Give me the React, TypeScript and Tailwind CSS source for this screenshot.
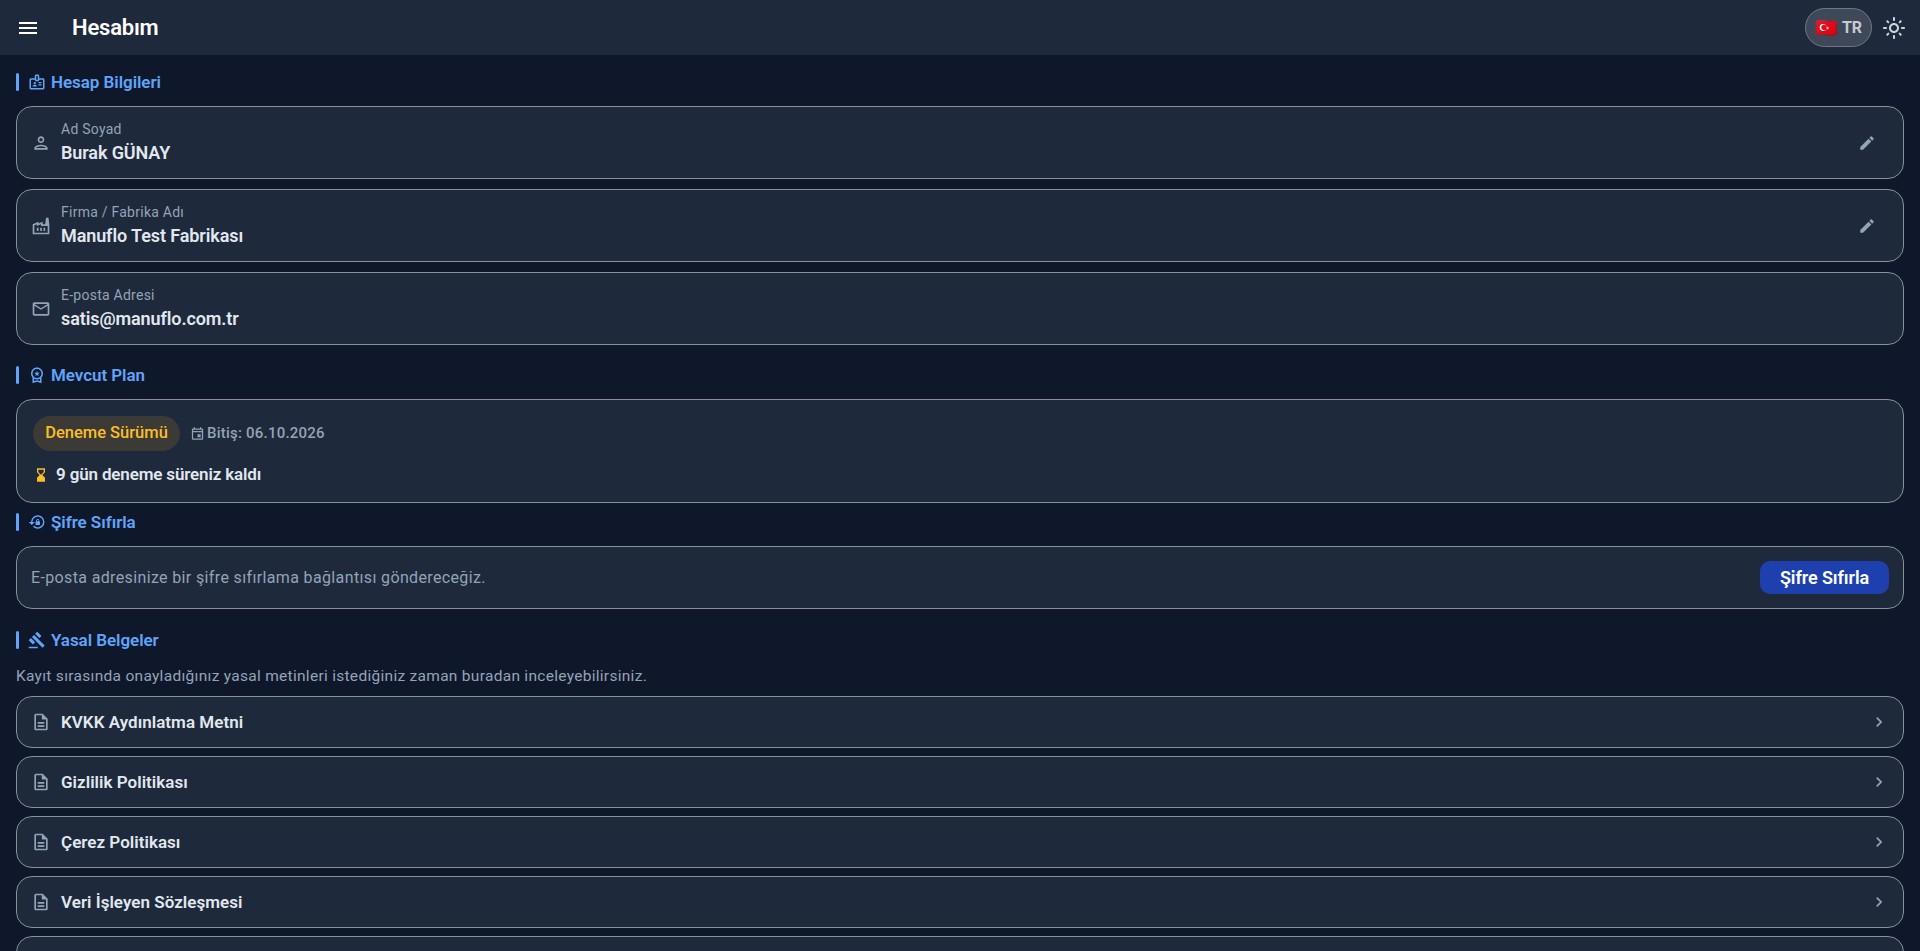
import React from "react";
import {
  MdChevronRight,
  MdEdit,
  MdGavel,
  MdHourglassBottom,
  MdLockReset,
  MdMenu,
  MdOutlineBadge,
  MdOutlineDescription,
  MdOutlineEmail,
  MdOutlineEvent,
  MdOutlineFactory,
  MdOutlineLightMode,
  MdOutlinePerson,
  MdOutlineWorkspacePremium,
} from "react-icons/md";

const cardClass = "rounded-2xl border border-[#8b8f98] bg-[#1e293b]";

function SectionTitle({ icon, title, className }: { icon: React.ReactNode; title: string; className: string }) {
  return (
    <div className={`flex h-[18px] items-center ${className}`}>
      <div className="h-[18px] w-[3px] rounded-sm bg-[#60a5fa]" />
      <span className="ml-[9px] text-[#60a5fa]">{icon}</span>
      <span className="ml-[5px] pt-px text-[17px] font-semibold tracking-[-0.05px] text-[#60a5fa]">{title}</span>
    </div>
  );
}

function InfoCard({
  icon,
  label,
  value,
  editable,
}: {
  icon: React.ReactNode;
  label: string;
  value: string;
  editable?: boolean;
}) {
  return (
    <div className={`flex h-[73px] items-center pl-[14px] pr-[27px] ${cardClass}`}>
      <span className="text-[#94a3b8]">{icon}</span>
      <div className="ml-[10px] flex-1">
        <div className="text-sm leading-5 tracking-[0.25px] text-[#94a3b8]">{label}</div>
        <div className="pb-px pt-[2px] text-lg font-semibold leading-6 tracking-[-0.1px] text-[#e2e8f0]">{value}</div>
      </div>
      {editable && <MdEdit className="text-[#94a3b8]" size={18} />}
    </div>
  );
}

function DocRow({ title }: { title: string }) {
  return (
    <div className={`flex h-[52px] shrink-0 items-center pl-[14px] pr-[14px] ${cardClass}`}>
      <MdOutlineDescription className="text-[#94a3b8]" size={20} />
      <span className="ml-[10px] flex-1 pt-px text-[17px] font-semibold tracking-[0.03px] text-[#e2e8f0]">{title}</span>
      <MdChevronRight className="text-[#94a3b8]" size={20} />
    </div>
  );
}

export default function App() {
  return (
    <div className="h-screen overflow-hidden bg-[#0f172a] font-['Roboto',sans-serif]">
      {/* App bar */}
      <header className="flex h-[55px] items-center bg-[#1e293b] pl-4 pr-[14px]">
        <MdMenu className="text-white" size={24} />
        <h1 className="ml-8 flex-1 text-[22px] font-semibold tracking-[-0.2px] text-white">Hesabım</h1>
        <div className="flex h-[39px] w-[67px] items-center justify-center gap-[5px] rounded-full border border-[#6f7785] bg-[#3f4858]">
          <span className="text-lg leading-none">🇹🇷</span>
          <span className="text-base font-bold tracking-[-0.2px] text-[#c5cad3]">TR</span>
        </div>
        <MdOutlineLightMode className="ml-[10px] text-[#cbd5e1]" size={24} />
      </header>

      <main className="flex flex-col px-4">
        <SectionTitle className="mt-[18px]" icon={<MdOutlineBadge size={18} />} title="Hesap Bilgileri" />
        <div className="mt-[15px] flex flex-col gap-[10px]">
          <InfoCard icon={<MdOutlinePerson size={20} />} label="Ad Soyad" value="Burak GÜNAY" editable />
          <InfoCard icon={<MdOutlineFactory size={20} />} label="Firma / Fabrika Adı" value="Manuflo Test Fabrikası" editable />
          <InfoCard icon={<MdOutlineEmail size={20} />} label="E-posta Adresi" value="satis@manuflo.com.tr" />
        </div>

        <SectionTitle className="mt-[21px]" icon={<MdOutlineWorkspacePremium size={18} />} title="Mevcut Plan" />
        <div className={`mt-[15px] h-[104px] px-4 pt-4 ${cardClass}`}>
          <div className="flex items-center">
            <span className="flex h-[35px] w-[147px] items-center justify-center rounded-full bg-[#3b3a36] text-[16.5px] font-medium text-[#fbbf24]">
              Deneme Sürümü
            </span>
            <MdOutlineEvent className="ml-[10px] text-[#94a3b8]" size={15} />
            <span className="ml-[2px] text-[15px] font-medium tracking-[0.22px] text-[#94a3b8]">Bitiş: 06.10.2026</span>
          </div>
          <div className="mt-[11px] flex items-center">
            <MdHourglassBottom className="text-[#fbbf24]" size={16} />
            <span className="ml-[7px] text-[17px] font-semibold tracking-[-0.15px] text-[#e2e8f0]">9 gün deneme süreniz kaldı</span>
          </div>
        </div>

        <SectionTitle className="mt-[10px]" icon={<MdLockReset size={18} />} title="Şifre Sıfırla" />
        <div className={`mt-[15px] flex h-[63px] items-center justify-between pl-[14px] pr-[14px] ${cardClass}`}>
          <span className="text-base tracking-[0.36px] text-[#94a3b8]">E-posta adresinize bir şifre sıfırlama bağlantısı göndereceğiz.</span>
          <button className="h-[33px] w-[129px] rounded-[10px] bg-[#1e40af] text-lg font-semibold tracking-[-0.1px] text-white">Şifre Sıfırla</button>
        </div>

        <SectionTitle className="mt-[22px]" icon={<MdGavel size={18} />} title="Yasal Belgeler" />
        <p className="mt-[17px] text-[15.5px] leading-5 tracking-[0.29px] text-[#94a3b8]">
          Kayıt sırasında onayladığınız yasal metinleri istediğiniz zaman buradan inceleyebilirsiniz.
        </p>
        <div className="mt-[10px] flex flex-col gap-2">
          <DocRow title="KVKK Aydınlatma Metni" />
          <DocRow title="Gizlilik Politikası" />
          <DocRow title="Çerez Politikası" />
          <DocRow title="Veri İşleyen Sözleşmesi" />
          <div className={`h-[52px] shrink-0 ${cardClass}`} />
        </div>
      </main>
    </div>
  );
}
